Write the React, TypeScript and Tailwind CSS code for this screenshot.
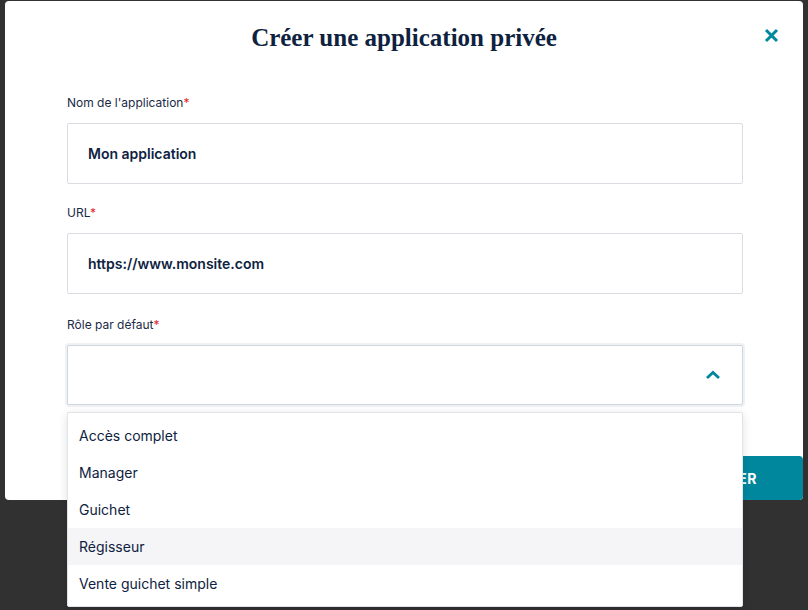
import React from "react";

const items = ["Accès complet", "Manager", "Guichet", "Régisseur", "Vente guichet simple"];

function Label({ text }: { text: string }) {
  return (
    <div className="text-[12px] leading-4 text-[#1b2a45] mb-3">
      {text}
      <span className="text-[#e5242b]">*</span>
    </div>
  );
}

export default function App() {
  return (
    <div
      className="w-[808px] h-[610px] bg-[#313131] pt-[1px] pl-[5px] overflow-hidden"
      style={{ fontFamily: "Inter, 'Noto Sans', sans-serif" }}
    >
      <div className="relative w-[798px] h-[499px] bg-white rounded-[4px] flex flex-col">
        <div className="relative h-[72px] flex items-center justify-center">
          <h1
            className="text-[25px] font-bold text-[#0e2240] leading-none"
            style={{ fontFamily: "'Liberation Serif', serif" }}
          >
            Créer une application privée
          </h1>
          <button className="absolute left-[759px] top-[27px] w-[15px] h-[15px]">
            <svg viewBox="0 0 15 15" width="15" height="15">
              <path d="M2 2 L13 13 M13 2 L2 13" stroke="#00889f" strokeWidth="3" strokeLinecap="butt" />
            </svg>
          </button>
        </div>
        <div className="pl-[62px] pr-[60px] pt-[22px] flex flex-col">
          <Label text="Nom de l'application" />
          <div className="h-[61px] border border-[#d9dde2] rounded-[2px] flex items-center pl-[20px] text-[14px] font-semibold text-[#0e2240]">
            Mon application
          </div>
          <div className="mt-[21px]">
            <Label text="URL" />
          </div>
          <div className="h-[61px] border border-[#d9dde2] rounded-[2px] flex items-center pl-[20px] text-[14px] font-semibold text-[#0e2240]">
            https://www.monsite.com
          </div>
          <div className="mt-[23px]">
            <Label text="Rôle par défaut" />
          </div>
          <div className="relative">
            <div className="h-[60px] border border-[#cfd6dd] rounded-[2px] shadow-[0_0_0_2px_#eef2f5] flex items-center justify-end pr-[21px]">
              <svg viewBox="0 0 16 10" width="16" height="10">
                <path d="M2 8 L8 2.5 L14 8" stroke="#00879e" strokeWidth="2.8" fill="none" />
              </svg>
            </div>
            <div className="absolute z-10 left-0 right-0 top-[67px] bg-white border border-[#e1e4e8] rounded-[2px] shadow-[0_2px_10px_rgba(0,0,0,0.12)] py-[4px]">
              {items.map((it, i) => (
                <div
                  key={it}
                  className={`h-[37px] flex items-center pl-[11px] text-[14px] text-[#0e2240] ${i === 3 ? "bg-[#f5f4f7]" : ""}`}
                >
                  {it}
                </div>
              ))}
            </div>
          </div>
        </div>
        <div className="mt-auto flex justify-end">
          <button className="h-[44px] px-[46px] bg-[#00879e] rounded-[4px] text-white text-[14px] font-bold tracking-[0.5px]">
            CRÉER
          </button>
        </div>
      </div>
    </div>
  );
}
